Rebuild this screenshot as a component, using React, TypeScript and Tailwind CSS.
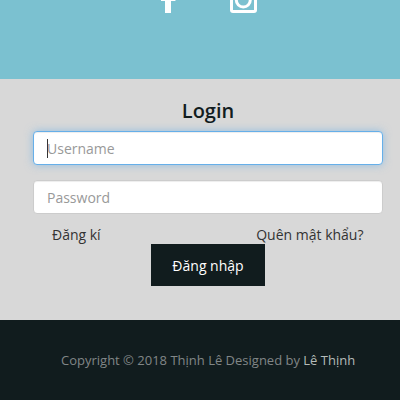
export default function App() {
  return (
    <div className="flex h-[400px] w-[400px] flex-col overflow-hidden bg-[#d8d8d8] font-['Open_Sans',sans-serif] text-[14px] leading-5">
      <header className="h-[79px] shrink-0 bg-[#7bc1d0]">
        <svg className="block h-[79px] w-full" viewBox="0 0 400 79" fill="none">
          <path d="M165 13V1h-4v-5h4v-4h6v4h5l-.6 5H171v12z" fill="white" />
          <rect x="231.5" y="-12.5" width="24" height="24" rx="1.5" stroke="white" strokeWidth="3" />
          <circle cx="243.3" cy="0" r="7" stroke="white" strokeWidth="3" />
        </svg>
      </header>
      <main className="flex h-[241px] shrink-0 flex-col items-center pt-5">
        <h1 className="ml-4 h-[32px] text-[20px] font-semibold leading-6 text-[#111c1e]">Login</h1>
        <div className="ml-[33px] flex h-[34px] w-[350px] items-center self-start rounded border border-[#66afe9] bg-white pt-px pl-[13px] text-[#999] shadow-[inset_0_1px_1px_rgba(0,0,0,.075),0_0_8px_rgba(102,175,233,.6)]">
          <span className="-mr-px h-[19px] w-px bg-[#333]" />Username
        </div>
        <div className="mt-[15px] ml-[33px] flex h-[34px] w-[350px] items-center self-start rounded border border-[#ccc] bg-white pt-px pl-[13px] text-[#999] shadow-[inset_0_1px_1px_rgba(0,0,0,.075)]">Password</div>
        <div className="flex h-[30px] w-full justify-between pt-[11px] pl-[52px] pr-[36.5px] text-[#333]">
          <a>Đăng kí</a><a>Quên mật khẩu?</a>
        </div>
        <button className="ml-4 h-[42px] w-[114px] bg-[#111c1e] pt-0.5 text-white">Đăng nhập</button>
      </main>
      <footer className="h-20 bg-[#111c1e] pt-[30px] pl-[61px] text-[13px] whitespace-nowrap text-[#818687]">
        Copyright © 2018 Thịnh Lê Designed by <a className="text-[#b4bbb9]">Lê Thịnh</a>
      </footer>
    </div>
  );
}
